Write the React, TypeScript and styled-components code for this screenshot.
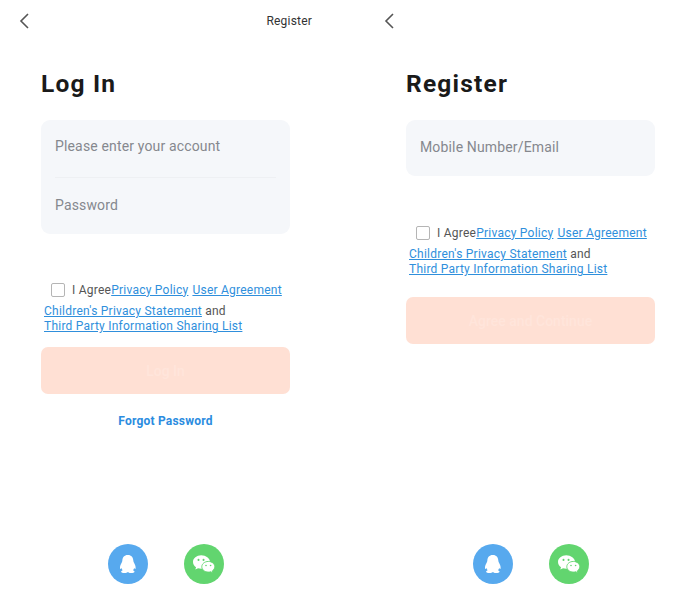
import styled, { createGlobalStyle } from 'styled-components'

const GlobalStyle = createGlobalStyle`
    html, body {
        margin: 0;
        padding: 0;
        background: #fff;
    }
    body {
        font-family: Roboto, "Liberation Sans", sans-serif;
    }
`

const Page = styled.div`
    display: flex;
    width: 678px;
    height: 614px;
    overflow: hidden;
`

const Screen = styled.section<{ $width: number }>`
    display: flex;
    flex-direction: column;
    flex: none;
    width: ${(p) => p.$width}px;
    height: 614px;
`

const TopBar = styled.header`
    display: flex;
    align-items: center;
    justify-content: space-between;
    height: 41px;
    padding: 0 53px 0 18px;
`

const BackButton = styled.button`
    display: flex;
    padding: 0;
    border: 0;
    background: none;
`

const TopLink = styled.span`
    font-size: 12px;
    letter-spacing: 0.2px;
    color: #333;
`

const Body = styled.div`
    display: flex;
    flex: 1;
    flex-direction: column;
    width: 249px;
    margin-left: 41px;
`

const Title = styled.h1`
    margin: 28px 0 0;
    font-size: 24.5px;
    line-height: 30px;
    font-weight: 700;
    letter-spacing: 1.2px;
    color: #1a1a1a;
`

const FieldCard = styled.div`
    margin-top: 21px;
    padding: 0 14px;
    border-radius: 9px;
    background: #f5f7fa;
`

const Field = styled.div<{ $divided?: boolean }>`
    display: flex;
    align-items: center;
    box-sizing: border-box;
    height: ${(p) => (p.$divided ? 58 : 56)}px;
    padding-bottom: ${(p) => (p.$divided ? 5 : 3)}px;
    border-bottom: ${(p) => (p.$divided ? '1px solid #eef0f3' : 'none')};
    font-size: 14px;
    letter-spacing: 0.15px;
    color: #85888e;
`

const Terms = styled.div<{ $top: number }>`
    margin-top: ${(p) => p.$top}px;
    padding-left: 3px;
    font-size: 12px;
    line-height: 15px;
    letter-spacing: 0.24px;
    color: #555;
`

const AgreeRow = styled.div`
    display: flex;
    align-items: center;
    height: 16px;
    margin-bottom: 6px;
    padding-left: 7px;
`

const CheckBox = styled.span`
    flex: none;
    box-sizing: border-box;
    width: 14px;
    height: 14px;
    margin-right: 7px;
    border: 1px solid #b5b5b5;
    border-radius: 2px;
`

const PolicyLink = styled.a<{ $gap?: number }>`
    margin-left: ${(p) => p.$gap ?? 0}px;
    color: #2f8fdc;
    text-decoration: underline;
`

const SubmitButton = styled.button<{ $top: number }>`
    width: 100%;
    height: 47px;
    margin-top: ${(p) => p.$top}px;
    border: 0;
    border-radius: 7px;
    background: #ffe0d4;
    font-family: inherit;
    font-size: 14px;
    font-weight: 500;
    color: #ffe5db;
`

const ForgotLink = styled.a`
    margin-top: 20px;
    font-size: 12px;
    line-height: 14px;
    font-weight: 700;
    letter-spacing: 0.22px;
    text-align: center;
    color: #2b8ce0;
`

const SocialRow = styled.div`
    display: flex;
    justify-content: center;
    gap: 36px;
    margin-top: auto;
    margin-bottom: 30px;
`

const SocialIcon = styled.div<{ $color: string }>`
    display: flex;
    align-items: center;
    justify-content: center;
    width: 40px;
    height: 40px;
    border-radius: 50%;
    background: ${(p) => p.$color};
`

const BackIcon = () => (
    <svg width="12" height="18" viewBox="0 0 12 18" fill="none">
        <path d="M10 2 3 9l7 7" stroke="#555" strokeWidth="1.6" />
    </svg>
)

const QqIcon = () => (
    <svg width="20" height="22" viewBox="0 0 22 24" fill="#fff">
        <path d="M11 2c3.600 0 5.600 2.600 5.800 6 .1 1 .2 1.600.8 2.600.9 1.500 2 3.800 1.800 6-.1 1-.7 1.100-1.600-.2-.2 1-.7 1.900-1.400 2.500 1 .4 1.800 1 1.800 1.700 0 1-2 1.400-3.700 1.400-1.300 0-2.400-.4-3.100-1-.4 0-.8 0-1.200 0-.7.600-1.800 1-3.100 1-1.700 0-3.700-.4-3.700-1.400 0-.7.800-1.300 1.800-1.700-.7-.6-1.200-1.500-1.400-2.500-.9 1.300-1.500 1.200-1.600.2-.2-2.200.9-4.500 1.800-6 .6-1 .7-1.600.8-2.600.2-3.400 2.200-6 5.800-6Z" />
    </svg>
)

const WechatIcon = () => (
    <svg width="24" height="22" viewBox="0 0 26 24">
        <path fill="#fff" d="M10 2.500c-5 0-9 3.200-9 7.300 0 2.300 1.300 4.300 3.300 5.700l-.8 2.600 3-1.500c1.100.3 2.300.5 3.500.5 4.900 0 9.500-3.400 9.500-7.300 0-4-4.500-7.300-9.500-7.300Z" />
        <path fill="#fff" stroke="#62d56f" strokeWidth="1" d="M17.700 9.200c-3.900 0-7.100 2.600-7.100 5.800s3.200 5.800 7.100 5.800c.9 0 1.800-.1 2.600-.4l2.500 1.300-.7-2.200c1.600-1.100 2.700-2.700 2.700-4.500 0-3.200-3.200-5.800-7.100-5.800Z" />
        <circle cx="7" cy="7.500" r="1.100" fill="#62d56f" />
        <circle cx="12.500" cy="7.500" r="1.100" fill="#62d56f" />
        <circle cx="15.200" cy="13.600" r=".9" fill="#62d56f" />
        <circle cx="20.200" cy="13.600" r=".9" fill="#62d56f" />
    </svg>
)

const TermsBlock = ({ top }: { top: number }) => (
    <Terms $top={top}>
        <AgreeRow>
            <CheckBox />
            I Agree
            <PolicyLink>Privacy Policy</PolicyLink>
            <PolicyLink $gap={4}>User Agreement</PolicyLink>
        </AgreeRow>
        <PolicyLink>Children's Privacy Statement</PolicyLink> and
        <br />
        <PolicyLink>Third Party Information Sharing List</PolicyLink>
    </Terms>
)

const Socials = () => (
    <SocialRow>
        <SocialIcon $color="#57a9ee">
            <QqIcon />
        </SocialIcon>
        <SocialIcon $color="#62d56f">
            <WechatIcon />
        </SocialIcon>
    </SocialRow>
)

const App = () => (
    <Page>
        <GlobalStyle />
        <Screen $width={365}>
            <TopBar>
                <BackButton>
                    <BackIcon />
                </BackButton>
                <TopLink>Register</TopLink>
            </TopBar>
            <Body>
                <Title>Log In</Title>
                <FieldCard>
                    <Field $divided>Please enter your account</Field>
                    <Field>Password</Field>
                </FieldCard>
                <TermsBlock top={48} />
                <SubmitButton $top={13}>Log In</SubmitButton>
                <ForgotLink>Forgot Password</ForgotLink>
                <Socials />
            </Body>
        </Screen>
        <Screen $width={313}>
            <TopBar>
                <BackButton>
                    <BackIcon />
                </BackButton>
            </TopBar>
            <Body>
                <Title>Register</Title>
                <FieldCard>
                    <Field>Mobile Number/Email</Field>
                </FieldCard>
                <TermsBlock top={49} />
                <SubmitButton $top={20}>Agree and Continue</SubmitButton>
                <Socials />
            </Body>
        </Screen>
    </Page>
)

export default App
